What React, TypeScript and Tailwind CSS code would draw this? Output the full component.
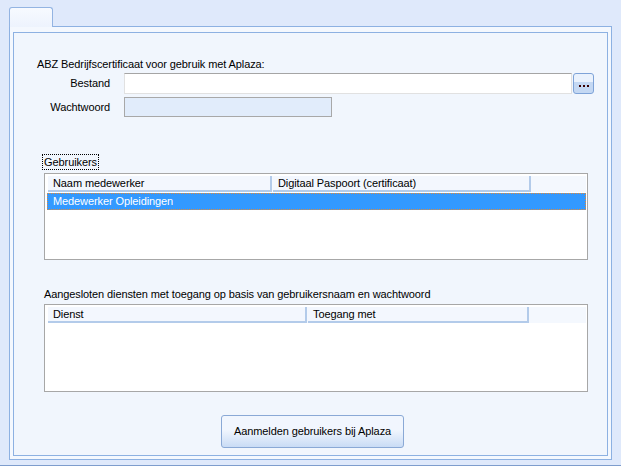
import React from "react";

const font = { fontFamily: '"Liberation Sans", Arial, sans-serif' };

function Header({ cols }: { cols: { label: string; w: string }[] }) {
  return (
    <div className="flex h-[16px] ml-[1px] bg-[#f4f8fe]">
      {cols.map((c, i) => (
        <div
          key={i}
          className={`${c.w} h-[16px] mr-[1px] border-b-2 border-r-2 border-[#b3cbea] bg-[#f3f7fe] pl-[5px] leading-[14px] text-black whitespace-nowrap`}
        >
          {c.label}
        </div>
      ))}
    </div>
  );
}

export default function App() {
  return (
    <div
      className="w-[621px] h-[466px] bg-[#dfe9fb] border-b border-[#7e9dcd] text-[11px] text-black tracking-[-0.1px] overflow-hidden"
      style={font}
    >
      <div className="pt-[7px] pl-[9px]">
        <div className="relative z-10 w-[44px] h-[20px] -mb-[1px] rounded-t-[3px] border border-b-0 border-[#93b4e2] bg-gradient-to-b from-[#f7faff] to-[#edf3fd]" />
        <div className="w-[603px] h-[434px] border border-[#8db1e2] bg-[#f4f8fe] pt-[5px] px-[3px] pb-[3px] flex">
          <div className="flex-1 border border-[#8db1e2] bg-[#f1f6fd] flex flex-col">
            <div className="mt-[25px] ml-[23px] h-[13px] leading-[13px]">
              ABZ Bedrijfscertificaat voor gebruik met Aplaza:
            </div>
            <div className="mt-[2px] flex items-center h-[21px]">
              <div className="w-[96px] text-right">Bestand</div>
              <div className="ml-[14px] w-[448px] h-[21px] bg-white border border-[#e1e1e1] border-t-[#a5a5a5]" />
              <div className="ml-[1px] w-[21px] h-[21px] rounded-[3px] border border-[#7ea3d8] bg-gradient-to-b from-[#eaf2fd] from-40% to-[#c4d8f3] to-40% flex items-end justify-center gap-[2px] pb-[6px]">
                <span className="w-[2px] h-[2px] bg-[#3a0000]" />
                <span className="w-[2px] h-[2px] bg-[#3a0000]" />
                <span className="w-[2px] h-[2px] bg-[#3a0000]" />
              </div>
            </div>
            <div className="mt-[3px] flex items-center h-[20px]">
              <div className="w-[96px] text-right">Wachtwoord</div>
              <div className="ml-[14px] w-[208px] h-[20px] bg-[#e1ecfb] border border-[#a8a8a8]" />
            </div>
            <div className="mt-[37px] ml-[28px] w-[57px] h-[16px] border border-dotted border-black leading-[14px] text-center whitespace-nowrap">
              Gebruikers
            </div>
            <div className="mt-[3px] ml-[30px] w-[544px] h-[87px] border border-[#a7a7a7] bg-white pt-[2px] pl-[2px] pr-[1px]">
              <Header
                cols={[
                  { label: "Naam medewerker", w: "w-[224px]" },
                  { label: "Digitaal Paspoort (certificaat)", w: "w-[258px]" },
                ]}
              />
              <div className="mt-[1px] h-[17px] bg-[#3399ff] border border-dotted border-[#e08a3c] text-white pl-[5px] leading-[15px]">
                Medewerker Opleidingen
              </div>
            </div>
            <div className="mt-[28px] ml-[30px] h-[13px] leading-[13px]">
              Aangesloten diensten met toegang op basis van gebruikersnaam en wachtwoord
            </div>
            <div className="mt-[3px] ml-[30px] w-[544px] h-[88px] border border-[#a7a7a7] bg-white pt-[2px] pl-[2px] pr-[1px]">
              <Header
                cols={[
                  { label: "Dienst", w: "w-[259px]" },
                  { label: "Toegang met", w: "w-[221px]" },
                ]}
              />
            </div>
            <div className="mt-[23px] ml-[207px] w-[183px] h-[33px] rounded-[3px] border border-[#8aa9d6] bg-gradient-to-b from-[#f1f6fe] from-45% to-[#c9dcf5] flex items-center justify-center">
              Aanmelden gebruikers bij Aplaza
            </div>
          </div>
        </div>
      </div>
    </div>
  );
}
